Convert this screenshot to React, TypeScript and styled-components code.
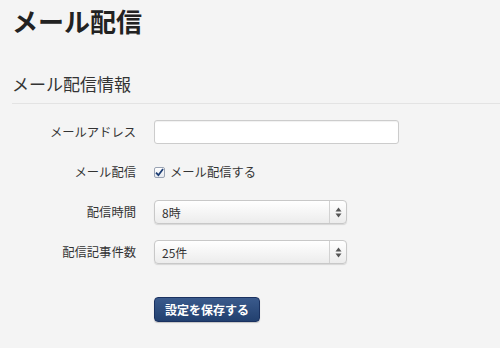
import React from "react";
import styled, { createGlobalStyle } from "styled-components";

const GlobalStyle = createGlobalStyle`
  html, body {
    margin: 0;
    padding: 0;
    background: #f4f4f4;
    font-family: "Noto Sans CJK JP", "Liberation Sans", sans-serif;
    color: #333;
  }
`;

const Page = () => {
  return (
    <Container>
      <GlobalStyle />
      <Title>メール配信</Title>
      <Section>
        <Legend>メール配信情報</Legend>
        <Form>
          <Row>
            <Label>メールアドレス</Label>
            <Input type="text" />
          </Row>
          <Row>
            <Label>メール配信</Label>
            <CheckLabel>
              <CheckBox>
                <svg width="9" height="9" viewBox="0 0 9 9">
                  <path d="M1 4.6 L3.4 7.2 L8 1" fill="none" stroke="#1d3d73" strokeWidth="1.8" />
                </svg>
              </CheckBox>
              メール配信する
            </CheckLabel>
          </Row>
          <Row>
            <Label>配信時間</Label>
            <Select>
              <SelectText>8時</SelectText>
              <Arrows>
                <svg width="7" height="11" viewBox="0 0 7 11">
                  <path d="M3.5 0.5 L6.5 4.5 L0.5 4.5 Z" fill="#555" />
                  <path d="M3.5 10.5 L6.5 6.5 L0.5 6.5 Z" fill="#555" />
                </svg>
              </Arrows>
            </Select>
          </Row>
          <Row>
            <Label>配信記事件数</Label>
            <Select>
              <SelectText>25件</SelectText>
              <Arrows>
                <svg width="7" height="11" viewBox="0 0 7 11">
                  <path d="M3.5 0.5 L6.5 4.5 L0.5 4.5 Z" fill="#555" />
                  <path d="M3.5 10.5 L6.5 6.5 L0.5 6.5 Z" fill="#555" />
                </svg>
              </Arrows>
            </Select>
          </Row>
          <Actions>
            <Button>設定を保存する</Button>
          </Actions>
        </Form>
      </Section>
    </Container>
  );
};

export default function App() {
  return <Page />;
}

const Container = styled.div`
  width: 500px;
  height: 348px;
  overflow: hidden;
  padding: 0 0 0 12px;
  box-sizing: border-box;
`;

const Title = styled.h1`
  margin: 0;
  padding-top: 2px;
  font-size: 26px;
  line-height: 38px;
  font-weight: 700;
  color: #222;
`;

const Section = styled.div`
  margin-top: 31px;
`;

const Legend = styled.div`
  font-size: 17px;
  line-height: 26px;
  color: #333;
  padding-bottom: 6px;
  border-bottom: 1px solid #e3e3e3;
`;

const Form = styled.div`
  padding-top: 16px;
  display: flex;
  flex-direction: column;
  gap: 16px;
`;

const Row = styled.div`
  display: flex;
  align-items: center;
  height: 24px;
`;

const Label = styled.div`
  width: 124px;
  text-align: right;
  padding-right: 18px;
  font-size: 12.3px;
  color: #333;
`;

const Input = styled.input`
  width: 245px;
  height: 24px;
  box-sizing: border-box;
  border: 1px solid #ccc;
  border-radius: 3px;
  background: #fff;
  box-shadow: inset 0 1px 1px rgba(0, 0, 0, 0.06);
  outline: none;
`;

const CheckLabel = styled.label`
  display: flex;
  align-items: center;
  gap: 5px;
  font-size: 12.3px;
  color: #333;
`;

const CheckBox = styled.span`
  width: 11px;
  height: 11px;
  box-sizing: border-box;
  border: 1px solid #9aa3b3;
  border-radius: 2px;
  background: linear-gradient(#fff, #e6e9ef);
  display: flex;
  align-items: center;
  justify-content: center;
`;

const Select = styled.div`
  width: 193px;
  height: 24px;
  box-sizing: border-box;
  border: 1px solid #c8c8c8;
  border-radius: 4px;
  background: linear-gradient(#ffffff, #ececec);
  box-shadow: 0 1px 1px rgba(0, 0, 0, 0.12);
  display: flex;
  align-items: center;
`;

const SelectText = styled.div`
  flex: 1;
  padding-left: 7px;
  font-size: 12px;
  color: #333;
`;

const Arrows = styled.div`
  width: 16px;
  height: 100%;
  border-left: 1px solid #d2d2d2;
  display: flex;
  align-items: center;
  justify-content: center;
`;

const Actions = styled.div`
  padding-left: 142px;
  padding-top: 16px;
`;

const Button = styled.button`
  width: 106px;
  height: 25px;
  border: 1px solid #1a3160;
  border-radius: 4px;
  background: linear-gradient(#3a5a8c, #22406f);
  color: #fff;
  font-family: "Noto Sans CJK JP", "Liberation Sans", sans-serif;
  font-size: 12px;
  font-weight: 700;
  box-shadow: 0 1px 1px rgba(0, 0, 0, 0.2);
  padding: 0;
`;
